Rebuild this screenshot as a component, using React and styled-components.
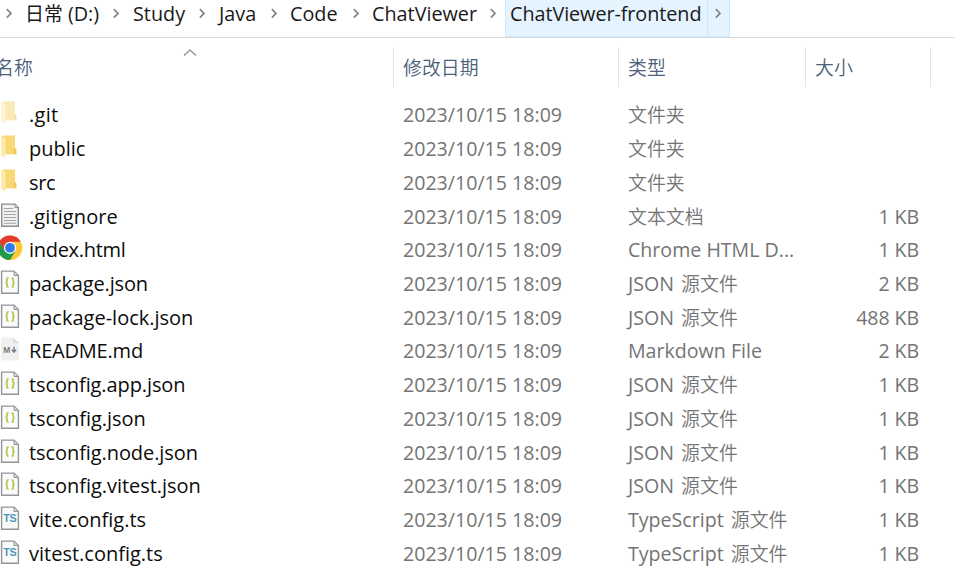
import React from 'react';
import styled, { createGlobalStyle } from 'styled-components';

const GlobalStyle = createGlobalStyle`
  * { box-sizing: border-box; }
  body { margin: 0; background: #fff; overflow: hidden; }
`;

const Window = styled.main`
  width: 955px;
  height: 569px;
  overflow: hidden;
  background: #fff;
  font-family: "Open Sans", "Noto Sans CJK SC", sans-serif;
  font-size: 19.8px;
  line-height: 28px;
  color: #191919;
  white-space: pre;
`;

const Han = styled.span`
  font-family: "Noto Sans CJK SC", sans-serif;
  font-size: 18.9px;
  font-weight: ${(p) => (p.$strong ? 400 : 350)};
  line-height: 1;
  letter-spacing: 0;
  margin-left: ${(p) => p.$shift || 0}px;
`;

const PathBar = styled.nav`
  display: flex;
  height: 38px;
  border-bottom: 1px solid #d9d9d9;
`;

const Crumb = styled.div`
  flex: none;
  width: ${(p) => p.$width}px;
  height: 28px;
`;

const Separator = styled.div`
  flex: none;
  display: flex;
  justify-content: center;
  width: ${(p) => p.$width}px;
  padding-top: 8px;
`;

const CurrentFolder = styled.div`
  flex: none;
  display: flex;
  width: 225px;
  height: 37px;
  background: #e5f3ff;
  border: solid #cce8ff;
  border-width: 0 1px 1px;
`;

const CurrentName = styled.div`
  width: 202px;
  padding-left: 4px;
  letter-spacing: -0.06px;
  border-right: 1px solid #cce8ff;
`;

const columns = `
  display: grid;
  grid-template-columns: 394px 225px 187px 125px;
`;

const HeaderRow = styled.div`
  ${columns}
  height: 60.6px;
  padding-top: 9px;
`;

const HeaderCell = styled.div`
  display: flex;
  align-items: center;
  justify-content: space-between;
  height: 40px;
  padding: 1px 0 0 9px;
  color: #4c607a;
  border-right: 1px solid #e3e3e3;
`;

const NameHeaderCell = styled(HeaderCell)`
  margin-left: -5px;
  padding-left: 0;
`;

const SortMark = styled.svg`
  width: 14px;
  height: 9px;
  margin: 0 196px 31px 0;
`;

const Row = styled.div`
  ${columns}
  height: 33.73px;
  align-items: center;
`;

const NameCell = styled.div`
  display: flex;
  align-items: center;
  color: #0c0c0c;
  font-size: 20px;
`;

const IconSlot = styled.span`
  display: block;
  flex: none;
  width: 29px;
  height: 26px;
  margin-top: -4px;
  opacity: ${(p) => (p.$faded ? 0.5 : 1)};
  svg { display: block; }
`;

const FileName = styled.span`
  letter-spacing: ${(p) => p.$track || 0}px;
`;

const InfoCell = styled.div`
  padding-left: 9px;
  color: #747474;
  font-size: 19.6px;
`;

const SizeCell = styled(InfoCell)`
  padding-right: 12px;
  text-align: right;
  letter-spacing: -0.1px;
`;

function Chevron() {
  return (
    <svg width="8" height="11" viewBox="0 0 8 11" fill="none">
      <path d="M1.8 1.2 6 5.4 1.8 9.6" stroke="#858585" strokeWidth="1.7" />
    </svg>
  );
}

function Folder() {
  return (
    <svg width="24" height="26" viewBox="0 0 24 26">
      <path d="M3 1.5H15V14L16.3 15.5V20.3H4Z" fill="#f8d775" />
      <path d="M13.6 16 15 14 16.3 15.5V20.3H13.6Z" fill="#efc95c" />
      <path d="M1 1.5 5.7 4.2V20L4.7 23.5 1.3 21.2Z" fill="#ffe9a6" />
    </svg>
  );
}

function Page() {
  return (
    <>
      <path d="M1.6 2.1H14L18.4 6.5V24.2H1.6Z" fill="#fafbfb" stroke="#939697" strokeWidth="1.4" />
      <path d="M14 2.1V6.5H18.4Z" fill="#d9dbdc" stroke="#939697" strokeWidth="1" />
    </>
  );
}

function TextFile() {
  return (
    <svg width="24" height="26" viewBox="0 0 24 26">
      <path d="M1.7 2.1H15L18.3 5.5V24.2H1.7Z" fill="#f1f1f1" stroke="#8d8d8d" strokeWidth="1.4" />
      <path d="M15 2.1V5.5H18.3Z" fill="#fff" stroke="#8d8d8d" />
      <path
        d="M4 6.5H13M4 9.5H16M4 12.5H16M4 15.5H16M4 18.5H16M4 21.3H16"
        stroke="#a3a3a3"
        strokeWidth="1.1"
      />
    </svg>
  );
}

function JsonFile() {
  return (
    <svg width="24" height="26" viewBox="0 0 24 26">
      <Page />
      <path
        d="M8.6 8.8Q7 8.8 7 10.4V12.2Q7 13.4 5.6 13.5Q7 13.6 7 14.8V16.6Q7 18.2 8.6 18.2M11.6 8.8Q13.2 8.8 13.2 10.4V12.2Q13.2 13.4 14.6 13.5Q13.2 13.6 13.2 14.8V16.6Q13.2 18.2 11.6 18.2"
        fill="none"
        stroke="#c0c655"
        strokeWidth="1.8"
      />
    </svg>
  );
}

function TsFile() {
  return (
    <svg width="24" height="26" viewBox="0 0 24 26">
      <Page />
      <text
        x="3.2"
        y="17"
        fill="#4f97b8"
        fontFamily="Liberation Sans, sans-serif"
        fontSize="10.8"
        fontWeight="700"
        textLength="13.6"
      >
        TS
      </text>
    </svg>
  );
}

function MarkdownFile() {
  return (
    <svg width="24" height="26" viewBox="0 0 24 26">
      <path d="M3 1.5H13L19 7V22.5Q19 24.5 17 24.5H3Q1 24.5 1 22.5V3.5Q1 1.5 3 1.5Z" fill="#f0f0f0" />
      <path d="M13 1.5V5Q13 7 15 7H19Z" fill="#dedede" />
      <text
        x="3.3"
        y="16.7"
        fill="#777"
        fontFamily="Liberation Sans, sans-serif"
        fontSize="8.4"
        fontWeight="700"
      >
        M
      </text>
      <path d="M14 10.8V16M11.8 13.6 14 16.2 16.2 13.6" fill="none" stroke="#777" strokeWidth="1.3" />
    </svg>
  );
}

function ChromeFile() {
  return (
    <svg width="24" height="26" viewBox="0 0 24 26">
      <circle cx="10" cy="12.8" r="12.3" fill="#fcc934" />
      <path d="M10 12.8V6.7H20.7A12.3 12.3 0 0 0-.65 6.65L4.7 15.9Z" fill="#e33b2e" />
      <path d="M10 12.8 4.7 15.9-.65 6.65A12.3 12.3 0 0 0 10 25.1L15.3 15.9Z" fill="#229a4b" />
      <circle cx="10" cy="12.8" r="6.1" fill="#fff" />
      <circle cx="10" cy="12.8" r="4.9" fill="#2f79ea" />
    </svg>
  );
}

const icons = {
  folder: Folder,
  text: TextFile,
  chrome: ChromeFile,
  json: JsonFile,
  markdown: MarkdownFile,
  ts: TsFile,
};

const json = ['JSON ', '源文件', 2];
const typescript = ['TypeScript ', '源文件', 2];

const files = [
  { name: '.git', icon: 'folder', type: ['', '文件夹'], faded: true, track: 0.3 },
  { name: 'public', icon: 'folder', type: ['', '文件夹'] },
  { name: 'src', icon: 'folder', type: ['', '文件夹'], track: -0.3 },
  { name: '.gitignore', icon: 'text', type: ['', '文本文档'], size: '1 KB', track: 0.1 },
  { name: 'index.html', icon: 'chrome', type: ['Chrome HTML D...', ''], size: '1 KB', track: -0.3 },
  { name: 'package.json', icon: 'json', type: json, size: '2 KB', track: -0.15 },
  { name: 'package-lock.json', icon: 'json', type: json, size: '488 KB' },
  { name: 'README.md', icon: 'markdown', type: ['Markdown File', ''], size: '2 KB', track: -0.2 },
  { name: 'tsconfig.app.json', icon: 'json', type: json, size: '1 KB', track: -0.1 },
  { name: 'tsconfig.json', icon: 'json', type: json, size: '1 KB', track: -0.05 },
  { name: 'tsconfig.node.json', icon: 'json', type: json, size: '1 KB', track: -0.08 },
  { name: 'tsconfig.vitest.json', icon: 'json', type: json, size: '1 KB', track: -0.05 },
  { name: 'vite.config.ts', icon: 'ts', type: typescript, size: '1 KB' },
  { name: 'vitest.config.ts', icon: 'ts', type: typescript, size: '1 KB' },
];

function FileRow({ file }) {
  const Icon = icons[file.icon];
  const [latin, han, shift] = file.type;
  return (
    <Row>
      <NameCell>
        <IconSlot $faded={file.faded}>
          <Icon />
        </IconSlot>
        <FileName $track={file.track}>{file.name}</FileName>
      </NameCell>
      <InfoCell>2023/10/15 18:09</InfoCell>
      <InfoCell>
        {latin}
        {han && <Han $shift={shift}>{han}</Han>}
      </InfoCell>
      <SizeCell>{file.size}</SizeCell>
    </Row>
  );
}

export default function App() {
  return (
    <Window>
      <GlobalStyle />
      <PathBar>
        <Separator $width={18}><Chevron /></Separator>
        <Crumb $width={7} />
        <Crumb $width={80}><Han $strong>日常</Han> (D:)</Crumb>
        <Separator $width={22}><Chevron /></Separator>
        <Crumb $width={6} />
        <Crumb $width={59}>Study</Crumb>
        <Separator $width={20}><Chevron /></Separator>
        <Crumb $width={7} />
        <Crumb $width={45}>Java</Crumb>
        <Separator $width={20}><Chevron /></Separator>
        <Crumb $width={6} />
        <Crumb $width={56}>Code</Crumb>
        <Separator $width={20}><Chevron /></Separator>
        <Crumb $width={6} />
        <Crumb $width={112}>ChatViewer</Crumb>
        <Separator $width={18}><Chevron /></Separator>
        <Crumb $width={3} />
        <CurrentFolder>
          <CurrentName>ChatViewer-frontend</CurrentName>
          <Separator $width={20}><Chevron /></Separator>
        </CurrentFolder>
      </PathBar>
      <HeaderRow>
        <NameHeaderCell>
          <Han>名称</Han>
          <SortMark viewBox="0 0 14 9">
            <path d="M1 7.5 7 2 13 7.5" fill="none" stroke="#8a8a8a" strokeWidth="1.2" />
          </SortMark>
        </NameHeaderCell>
        <HeaderCell><Han>修改日期</Han></HeaderCell>
        <HeaderCell><Han>类型</Han></HeaderCell>
        <HeaderCell><Han>大小</Han></HeaderCell>
      </HeaderRow>
      {files.map((file) => (
        <FileRow key={file.name} file={file} />
      ))}
    </Window>
  );
}
